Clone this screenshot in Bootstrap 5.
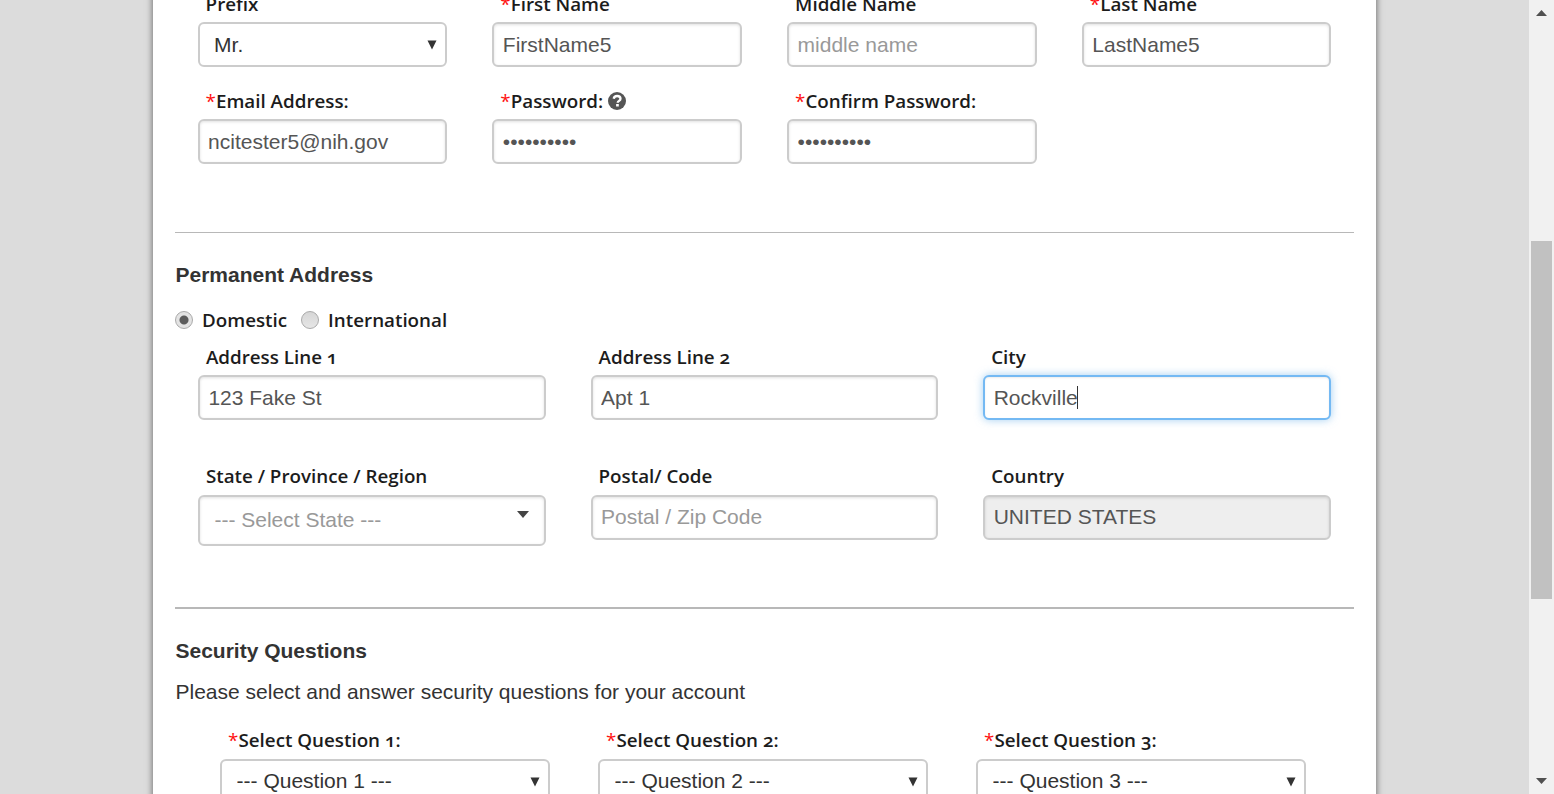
<!DOCTYPE html>
<html lang="en">
<head>
<meta charset="utf-8">
<title>Account Registration</title>
<link rel="stylesheet" href="https://cdn.jsdelivr.net/npm/bootstrap@5.3.0/dist/css/bootstrap.min.css">
<style>
html,body{height:100%}
body{background:#dcdcdc;color:#333;font-family:"Liberation Sans",Arial,sans-serif;font-size:21px;line-height:30px;overflow:hidden}
.page-area{flex:1;min-width:0;height:100%;overflow:hidden;padding:0 153px}
.panel{background:#fff;height:820px;margin-top:-12px;padding:0 22px;box-shadow:0 0 6px 1px #777}
.form-row{--bs-gutter-x:0;margin:0}
.form-row>*{padding-left:22.6px;padding-right:22.6px}
.names-row{margin-bottom:18px}
.address{width:1178px}
.address>*{padding-left:22.9px;padding-right:22px}
.address-row{height:79px;margin-bottom:41px}
.questions{padding:0 22.5px}
.questions .form-row>*{padding-right:25.4px}
.field-label{display:flex;align-items:center;height:30px;margin-bottom:4px;padding-left:8px}
.shift .field-label{padding-top:2px}
.field-label,.radio-text{font-family:"Open Sans",sans-serif;font-weight:600;font-size:18.8px;color:#1c1c1c;white-space:nowrap;font-feature-settings:"onum"}
.req{color:#f11;font-weight:500}
.form-control,.form-select{height:45px;border:2px solid #ccc;border-radius:6px;padding:0 8.5px;font-size:21px;line-height:1.2;color:#555;box-shadow:inset 0 1px 3px rgba(0,0,0,.12)}
.form-control::placeholder{color:#999}
.form-control:disabled{background:#eee;opacity:1}
.form-control.active-field{border-color:#74b9f3;box-shadow:inset 0 1px 2px rgba(0,0,0,.08),0 0 8px rgba(102,175,233,.6)}
.form-select{color:#333;padding-left:14.5px;box-shadow:none;background-image:url("data:image/svg+xml,%3Csvg xmlns='http://www.w3.org/2000/svg' viewBox='0 0 10 10'%3E%3Cpath fill='%23333' d='M.5 .5h9L5 9.5z'/%3E%3C/svg%3E");background-size:10px 10px;background-position:right 8px center}
.raised .form-control,.raised .form-select{padding-bottom:2px}
.form-select.state-select{height:51px;color:#999;background-image:url("data:image/svg+xml,%3Csvg xmlns='http://www.w3.org/2000/svg' viewBox='0 0 12 7'%3E%3Cpath fill='%23444' d='M0 0h12L6 7z'/%3E%3C/svg%3E");background-size:12px 7px;background-position:right 15px top 14px;box-shadow:inset 0 1px 3px rgba(0,0,0,.12)}
.section-rule{border:0;opacity:1;margin:68px 0 27px;height:1px;background:#b8b8b8}
.section-rule.thick{height:2px;margin-top:61px}
.section-title{font-size:21px;font-weight:700;line-height:30px;margin:0;padding-left:.5px}
.section-intro{margin:11px 0 18px;padding-left:.5px}
.form-check-input{width:18px;height:18px;margin:0 9px 0 0;border:1px solid #aaa;background:linear-gradient(#d6d6d6,#e6e6e6);flex:none}
.form-check-input:checked[type=radio]{border-color:#aaa;background:radial-gradient(circle,#5c5c5c 4px,#e3e3e3 5px)}
.radio-line{height:30px;margin:15px 0 6px}
.radio-line label+label{margin-left:14px}
.caret{position:absolute;left:117px;top:45px;width:1px;height:23px;background:#333}
.scroll-track{width:25px;background:#f1f1f1}
.scroll-track svg{display:block;width:11px;height:6px;margin-left:7px}
.scroll-thumb{width:21px;height:358px;margin:225px 0 179px 2px;background:#c1c1c1}
</style>
</head>
<body>
<div class="d-flex h-100">
<main class="page-area">
<form class="panel">
<div class="row form-row names-row shift">
<div class="col-3"><label class="field-label">Prefix</label><select class="form-select"><option>Mr.</option></select></div>
<div class="col-3"><label class="field-label"><span class="req">*</span>First Name</label><input class="form-control" value="FirstName5"></div>
<div class="col-3"><label class="field-label">Middle Name</label><input class="form-control" placeholder="middle name"></div>
<div class="col-3"><label class="field-label"><span class="req">*</span>Last Name</label><input class="form-control" value="LastName5"></div>
</div>
<div class="row form-row shift">
<div class="col-3"><label class="field-label"><span class="req">*</span>Email Address:</label><input class="form-control" value="ncitester5@nih.gov"></div>
<div class="col-3"><label class="field-label"><span class="req">*</span>Password:<svg style="margin-left:5px" width="18" height="18" viewBox="0 0 18 18"><circle cx="9" cy="9" r="9" fill="#555"/><path d="M5.7 6.8C6 4.9 7.3 4 9.1 4c2 0 3.4 1 3.4 2.7 0 2.2-2.8 2.1-2.8 4.1" fill="none" stroke="#fff" stroke-width="2.3"/><path d="M8.1 12h2.7v2.5H8.1z" fill="#fff"/></svg></label><input class="form-control" type="password" value="abcdefghij"></div>
<div class="col-3"><label class="field-label"><span class="req">*</span>Confirm Password:</label><input class="form-control" type="password" value="abcdefghij"></div>
</div>

<hr class="section-rule">
<h2 class="section-title">Permanent Address</h2>
<div class="d-flex radio-line">
<label class="d-flex align-items-center"><input class="form-check-input" type="radio" name="region" checked><span class="radio-text">Domestic</span></label>
<label class="d-flex align-items-center"><input class="form-check-input" type="radio" name="region"><span class="radio-text">International</span></label>
</div>
<div class="row form-row address address-row shift">
<div class="col-4"><label class="field-label">Address Line 1</label><input class="form-control" value="123 Fake St"></div>
<div class="col-4"><label class="field-label">Address Line 2</label><input class="form-control" value="Apt 1"></div>
<div class="col-4 position-relative"><label class="field-label">City</label><input class="form-control active-field" value="Rockville"><span class="caret"></span></div>
</div>
<div class="row form-row address raised">
<div class="col-4"><label class="field-label">State / Province / Region</label><select class="form-select state-select"><option>--- Select State ---</option></select></div>
<div class="col-4"><label class="field-label">Postal/ Code</label><input class="form-control" placeholder="Postal / Zip Code"></div>
<div class="col-4"><label class="field-label">Country</label><input class="form-control" value="UNITED STATES" disabled></div>
</div>

<hr class="section-rule thick">
<h2 class="section-title">Security Questions</h2>
<p class="section-intro">Please select and answer security questions for your account</p>
<div class="questions"><div class="row form-row raised">
<div class="col-4"><label class="field-label"><span class="req">*</span>Select Question 1:</label><select class="form-select"><option>--- Question 1 ---</option></select></div>
<div class="col-4"><label class="field-label"><span class="req">*</span>Select Question 2:</label><select class="form-select"><option>--- Question 2 ---</option></select></div>
<div class="col-4"><label class="field-label"><span class="req">*</span>Select Question 3:</label><select class="form-select"><option>--- Question 3 ---</option></select></div>
</div></div>
</form>
</main>
<aside class="scroll-track">
<svg viewBox="0 0 11 6" style="margin-top:10px"><path fill="#505050" d="M5.5 0L11 6H0z"/></svg>
<div class="scroll-thumb"></div>
<svg viewBox="0 0 11 6"><path fill="#505050" d="M0 0h11L5.5 6z"/></svg>
</aside>
</div>
<script src="https://cdn.jsdelivr.net/npm/bootstrap@5.3.0/dist/js/bootstrap.bundle.min.js"></script>
</body></html>
